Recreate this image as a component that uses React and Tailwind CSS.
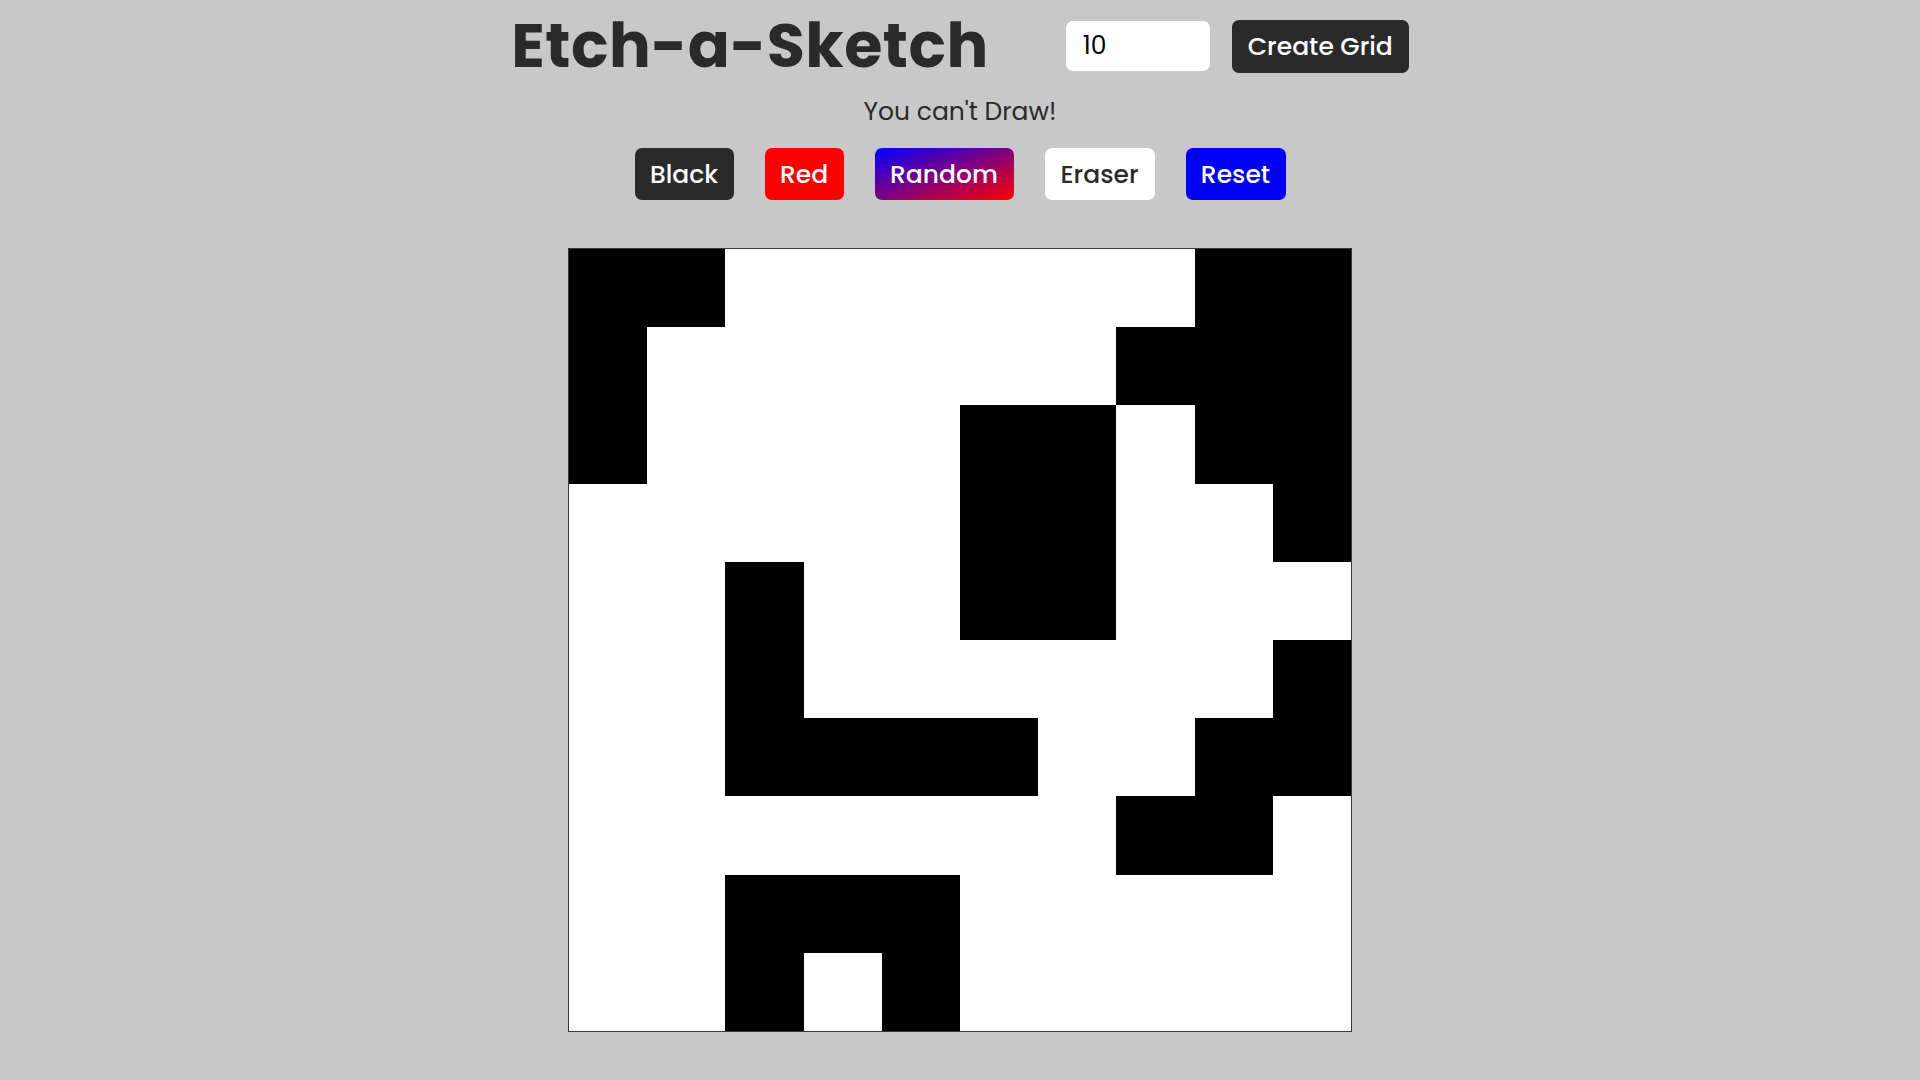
const pattern = [
  '1100000011',
  '1000000111',
  '1000011011',
  '0000011001',
  '0010011000',
  '0010000001',
  '0011110011',
  '0000000110',
  '0011100000',
  '0010100000',
];

const font = { fontFamily: 'Poppins, Inter, "Noto Sans", sans-serif' };

function ModeButton({ children, className }) {
  return (
    <button
      type="button"
      className={`h-[52px] rounded-[7px] text-[25px] font-medium leading-none ${className}`}
    >
      {children}
    </button>
  );
}

export default function App() {
  return (
    <div className="min-h-screen bg-[#c8c8c8] text-[#2a2a2a]" style={font}>
      {/* header */}
      <div className="flex items-center justify-center pt-[15px]">
        <h1 className="text-[62px] font-bold leading-none tracking-[0.5px] mr-[77px]">Etch-a-Sketch</h1>
        <input
          type="text"
          defaultValue="10"
          className="w-[144px] h-[50px] rounded-[7px] bg-white pl-[17px] text-[25px] text-black outline-none"
        />
        <button
          type="button"
          className="ml-[22px] w-[177px] h-[53px] rounded-[7px] bg-[#2a2a2a] text-white text-[25px] font-medium leading-none"
        >
          Create Grid
        </button>
      </div>

      <p className="mt-[21px] text-center text-[25px] leading-[28px]">You can't Draw!</p>

      {/* colour modes */}
      <div className="mt-[22px] flex justify-center gap-[31px]">
        <ModeButton className="w-[99px] bg-[#2a2a2a] text-white">Black</ModeButton>
        <ModeButton className="w-[79px] bg-[#ff0000] text-white">Red</ModeButton>
        <ModeButton className="w-[139px] bg-linear-to-br/srgb from-[#0000ff] to-[#ff0000] text-white">Random</ModeButton>
        <ModeButton className="w-[110px] bg-white text-[#2a2a2a]">Eraser</ModeButton>
        <ModeButton className="w-[100px] bg-[#0000ff] text-white">Reset</ModeButton>
      </div>

      {/* sketch grid */}
      <div className="mt-[48px] flex justify-center">
        <div className="grid grid-cols-10 grid-rows-10 w-[784px] h-[784px] border border-[#3a3a3a] bg-white">
          {pattern.flatMap((row, r) =>
            row.split('').map((c, i) => (
              <div key={`${r}-${i}`} className={c === '1' ? 'bg-black' : 'bg-white'} />
            ))
          )}
        </div>
      </div>
    </div>
  );
}
